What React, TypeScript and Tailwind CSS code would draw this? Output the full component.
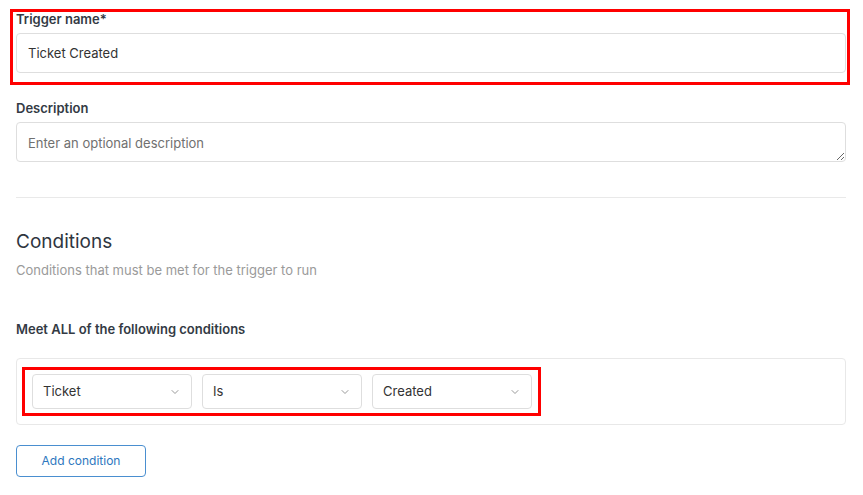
import { ChevronDown } from "lucide-react";

const Select = ({ value }: { value: string }) => (
    <div className="flex h-[35px] w-[160px] items-center justify-between rounded border border-[#dedede] bg-white pl-[10px] pr-[10px] text-[13px] text-[#333]">
        <span>{value}</span>
        <ChevronDown size={12} strokeWidth={1.75} className="text-[#8a8a8a]" />
    </div>
);

const App = () => {
    return (
        <div className="min-h-[495px] bg-white px-4 pt-[9px] text-[#2f3640]" style={{ fontFamily: "Inter, 'Noto Sans', sans-serif" }}>
            <div className="relative w-[830px]">
                <div className="pointer-events-none absolute -left-[6px] -right-[4px] -top-[0px] -bottom-[12px] border-[3px] border-[#ff0000]" />
                <label className="block text-[13px] font-semibold leading-5 text-[#333a44]">Trigger name*</label>
                <input
                    defaultValue="Ticket Created"
                    className="mt-1 block h-10 w-full rounded border border-[#dedede] px-[11px] text-[13px] text-[#333] outline-none"
                />
            </div>

            <div className="mt-[25px] w-[830px]">
                <label className="block text-[13px] font-semibold leading-5 text-[#333a44]">Description</label>
                <textarea
                    placeholder="Enter an optional description"
                    className="mt-1 block h-10 w-full rounded border border-[#dedede] px-[11px] py-[10px] text-[13px] leading-5 text-[#333] outline-none placeholder:text-[#707070]"
                />
            </div>

            <div className="mt-[35px] h-px w-[830px] bg-[#e9e9e9]" />

            <h2 className="mt-[30px] text-[19px] font-normal leading-7 text-[#2f3640]">Conditions</h2>
            <p className="mt-[4px] text-[13px] leading-5 text-[#9a9a9a]">Conditions that must be met for the trigger to run</p>

            <p className="mt-[39px] text-[13px] font-semibold leading-5 text-[#333a44]">Meet ALL of the following conditions</p>

            <div className="mt-[19px] w-[830px] rounded border border-[#e8e8e8] p-[15px]">
                <div className="relative flex gap-[10px]">
                    <div className="pointer-events-none absolute -left-[10px] -top-[7px] -bottom-[7px] w-[519px] border-[3px] border-[#ff0000]" />
                    <Select value="Ticket" />
                    <Select value="Is" />
                    <Select value="Created" />
                </div>
            </div>

            <button className="mt-[20px] flex h-8 w-[130px] items-center justify-center rounded border border-[#4a8fd0] bg-white text-[12px] text-[#2d77be]">
                Add condition
            </button>
        </div>
    );
};

export default App;
